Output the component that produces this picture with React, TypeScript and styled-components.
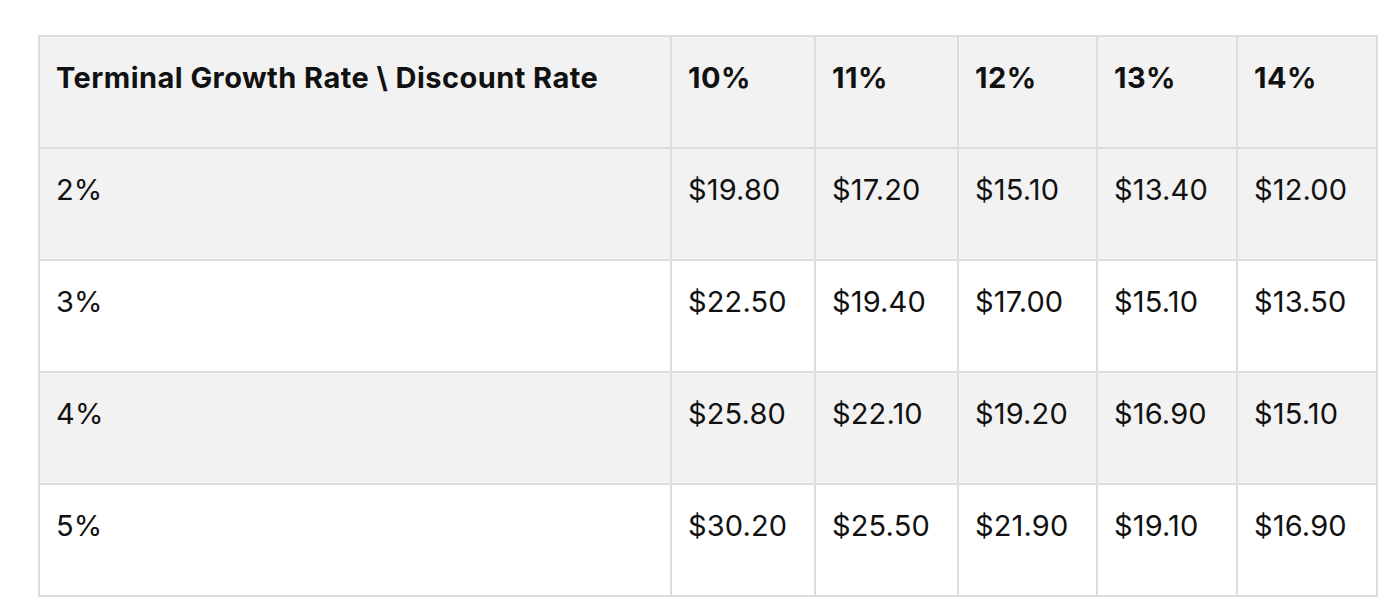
import React from 'react';
import styled, { createGlobalStyle } from 'styled-components';

const GlobalStyle = createGlobalStyle`
  html, body {
    margin: 0;
    padding: 0;
    background: #ffffff;
  }
  body {
    font-family: Inter, "Noto Sans", sans-serif;
    color: #111111;
  }
`;

const Page = styled.div`
  padding: 35px 0 0 38px;
`;

const Grid = styled.div`
  display: grid;
  grid-template-columns: 632px 144px 143px 139px 140px 140px;
  grid-auto-rows: 112px;
  width: max-content;
  border-top: 2px solid #dddddd;
  border-left: 2px solid #dddddd;
`;

const Cell = styled.div<{ $shade: boolean; $head?: boolean }>`
  box-sizing: border-box;
  padding: 20px 16px 0 16px;
  border-right: 2px solid #dddddd;
  border-bottom: 2px solid #dddddd;
  background: ${(p) => (p.$shade ? '#f2f2f2' : '#ffffff')};
  font-size: 29px;
  line-height: 42px;
  font-weight: ${(p) => (p.$head ? 700 : 400)};
  letter-spacing: ${(p) => (p.$head ? '0.45px' : '0.15px')};
  white-space: nowrap;
`;

const rates = ['10%', '11%', '12%', '13%', '14%'];

const rows: { growth: string; values: string[] }[] = [
  { growth: '2%', values: ['$19.80', '$17.20', '$15.10', '$13.40', '$12.00'] },
  { growth: '3%', values: ['$22.50', '$19.40', '$17.00', '$15.10', '$13.50'] },
  { growth: '4%', values: ['$25.80', '$22.10', '$19.20', '$16.90', '$15.10'] },
  { growth: '5%', values: ['$30.20', '$25.50', '$21.90', '$19.10', '$16.90'] },
];

const App = () => {
  return (
    <Page>
      <GlobalStyle />
      <Grid>
        <Cell $shade $head>Terminal Growth Rate \ Discount Rate</Cell>
        {rates.map((r) => (
          <Cell key={r} $shade $head>
            {r}
          </Cell>
        ))}
        {rows.map((row, i) => (
          <React.Fragment key={row.growth}>
            <Cell $shade={i % 2 === 0}>{row.growth}</Cell>
            {row.values.map((v, j) => (
              <Cell key={j} $shade={i % 2 === 0}>
                {v}
              </Cell>
            ))}
          </React.Fragment>
        ))}
      </Grid>
    </Page>
  );
};

export default App;
